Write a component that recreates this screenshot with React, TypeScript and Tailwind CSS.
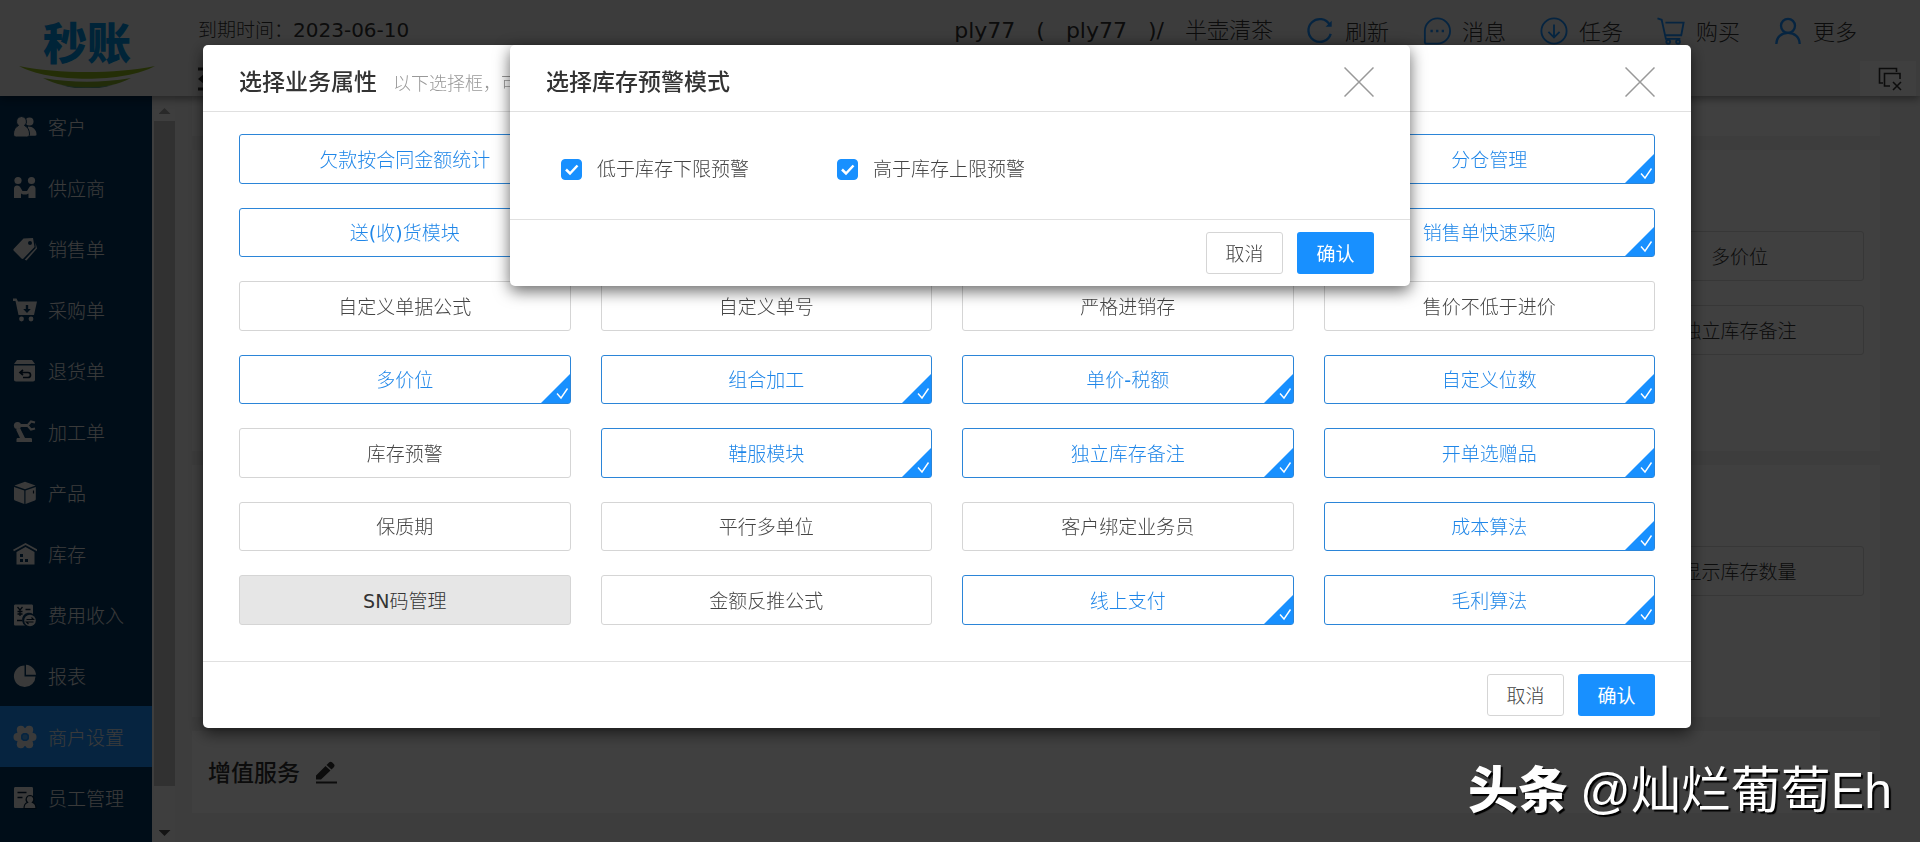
import React, { useState } from 'react';

type IconProps = { className?: string };

const UsersIcon: React.FC<IconProps> = ({ className }) => (
    <svg viewBox="0 0 24 24" fill="currentColor" className={className}>
        <circle cx="16.5" cy="6.5" r="4" />
        <path d="M15 11.500c5 0 8.500 3.500 8.500 8 0 .8-.5 1.200-1.300 1.200H15z" />
        <path d="M8.500 1.500a5 5 0 0 1 3 9c3 1.300 5 4.500 5 8.500 0 2-1 3-3 3h-10c-2 0-3-1-3-3 0-4 2-7.200 5-8.500a5 5 0 0 1 3-9z" stroke="#003560" strokeWidth="1" />
    </svg>
);

const HandshakeIcon: React.FC<IconProps> = ({ className }) => (
    <svg viewBox="0 0 24 24" fill="currentColor" className={className}>
        <circle cx="5" cy="4.500" r="3.600" />
        <circle cx="18.500" cy="4.500" r="3.600" />
        <path d="M1 22V12.500C1 10.500 2.500 9.500 4 9.500c2 0 3 1 4 3l1.500 2.500h4.500l1.500-2.500c1-2 2-3 4-3 1.500 0 3 1 3 3V22h-7v-4.500l-2 1h-3.500l-2-1V22z" />
    </svg>
);

const TagIcon: React.FC<IconProps> = ({ className }) => (
    <svg viewBox="0 0 24 24" fill="currentColor" className={className}>
        <path fillRule="evenodd" d="M10.500 1.500 20 1l1.500 9-11 11.500c-.6.600-1.300.600-2 0L.8 13.700c-.6-.6-.6-1.300 0-2zM17 4a2 2 0 1 0 0 4 2 2 0 0 0 0-4z" />
        <path d="M22.500 5.500 24 11.500 13.500 23.500l-1.800-.8L22.700 11z" />
    </svg>
);

const PurchaseIcon: React.FC<IconProps> = ({ className }) => (
    <svg viewBox="0 0 24 24" fill="currentColor" className={className}>
        <path fillRule="evenodd" d="M0 .500h3.500l1.500 3h19l-3 13.500H5.500L2.500 3H0zM12.800 7v4h-2.600l3.800 4 3.800-4h-2.600V7z" />
        <circle cx="8.500" cy="21" r="2.400" />
        <circle cx="18" cy="21" r="2.400" />
    </svg>
);

const ReturnIcon: React.FC<IconProps> = ({ className }) => (
    <svg viewBox="0 0 24 24" fill="currentColor" className={className}>
        <path d="M4 1h15l3 4H1z" />
        <path d="M1 6.500h21v14c0 1.200-.6 2-2 2H3c-1.400 0-2-.8-2-2z" />
        <path d="M10 11 7 13.500l3 2.500M7.500 13.500H15a2.500 2.500 0 0 1 0 5h-5" fill="none" stroke="#001f3a" strokeWidth="1.700" />
    </svg>
);

const RobotArmIcon: React.FC<IconProps> = ({ className }) => (
    <svg viewBox="0 0 24 24" fill="currentColor" className={className}>
        <circle cx="4.500" cy="5.500" r="3.600" />
        <path d="M8 4h6.500v3H8zM3 9.500l4-1.500 5 10h5.500c1 0 1.500.5 1.500 1.500V22H3.500v-2.500c0-1 .5-1.500 1.500-1.500h2z" />
        <path d="M22 2.500 18 1.500l-3.500 4 3.500 4 4-1" fill="none" stroke="currentColor" strokeWidth="2.200" />
    </svg>
);

const BoxIcon: React.FC<IconProps> = ({ className }) => (
    <svg viewBox="0 0 24 24" fill="currentColor" className={className}>
        <path d="M12 .800 22.500 4.500 12 8.200 1.500 4.500z" />
        <path d="M1 6l10.300 3.600V23L2 19.500c-.7-.3-1-.8-1-1.500zM22.800 6 12.500 9.600V23l9.300-3.500c.7-.3 1-.8 1-1.500z" />
        <path d="M20.500 9.500v3" stroke="#001f3a" strokeWidth="1.200" />
    </svg>
);

const WarehouseIcon: React.FC<IconProps> = ({ className }) => (
    <svg viewBox="0 0 24 24" fill="currentColor" className={className}>
        <path d="M.5 8.500 12.500 2l12 6.500" fill="none" stroke="currentColor" strokeWidth="1.800" />
        <path fillRule="evenodd" d="M3.500 10 12.500 5l9 5v12.500h-18zM7 12v3h3v-3zM7 17v3h3v-3zM12 17v3h3v-3z" />
    </svg>
);

const ExpenseIcon: React.FC<IconProps> = ({ className }) => (
    <svg viewBox="0 0 24 24" fill="currentColor" className={className}>
        <path d="M1 3c0-1 .6-1.500 1.500-1.500h16c1 0 1.500.5 1.500 1.500v8a7 7 0 0 0-8 11.500H2.500C1.600 22.500 1 22 1 21z" />
        <path d="m4.500 4 2.500 3 2.500-3M7 7v6M4.500 8.500h5M4.500 11h5M12.500 6.500h5M4 17.500h5" fill="none" stroke="#001f3a" strokeWidth="1.300" />
        <circle cx="17" cy="17.500" r="5.800" />
        <path d="M13.500 16.500h7l-2-2M20.500 19h-7l2 2" fill="none" stroke="#001f3a" strokeWidth="1.200" />
    </svg>
);

const PieIcon: React.FC<IconProps> = ({ className }) => (
    <svg viewBox="0 0 24 24" fill="currentColor" className={className}>
        <path d="M11.500 1.500v11h11A10.800 10.800 0 1 1 11.500 1.500z" />
        <path d="M13 .800c5.500.5 9.500 4.500 10 10H13z" />
    </svg>
);

const GearIcon: React.FC<IconProps> = ({ className }) => (
    <svg viewBox="0 0 24 24" fill="currentColor" className={className}>
        <circle cx="7.800" cy="4.800" r="4" />
        <circle cx="16.200" cy="4.800" r="4" />
        <circle cx="19.500" cy="12" r="4" />
        <circle cx="16.200" cy="19.200" r="4" />
        <circle cx="7.800" cy="19.200" r="4" />
        <circle cx="4.500" cy="12" r="4" />
        <circle cx="12" cy="12" r="6.500" fill="none" stroke="currentColor" strokeWidth="5" />
        <circle cx="12" cy="12" r="4" fill="#1890ff" />
        <circle cx="12" cy="12" r="2.500" opacity=".3" />
    </svg>
);

const StaffIcon: React.FC<IconProps> = ({ className }) => (
    <svg viewBox="0 0 24 24" fill="currentColor" className={className}>
        <path d="M1 2.500C1 1.500 1.500 1 2.500 1h16c1 0 1.500.5 1.500 1.500V22H2.500C1.500 22 1 21.500 1 20.500z" />
        <path d="M4.500 6.500h9M4.500 11.500h5" stroke="#001f3a" strokeWidth="1.600" />
        <path d="M17 9.500a4 4 0 0 1 2.500 7c2 .6 3.500 2.600 3.500 6H11c0-3.400 1.500-5.400 3.500-6a4 4 0 0 1 2.500-7z" stroke="#001f3a" strokeWidth="1.200" />
    </svg>
);

const lineIcon = { viewBox: '0 0 30 30', fill: 'none', stroke: 'currentColor', strokeWidth: 2 };

const RefreshIcon: React.FC<IconProps> = ({ className }) => (
    <svg {...lineIcon} strokeWidth={2.5} className={className}>
        <path d="M25.500 8.500A12.200 12.200 0 1 0 26.500 18" />
        <path d="M27.500 4v6.500h-6.500z" fill="currentColor" stroke="none" />
    </svg>
);

const MessageIcon: React.FC<IconProps> = ({ className }) => (
    <svg {...lineIcon} className={className}>
        <path d="M4 28.500h11.500A13.500 13.500 0 1 0 2 15v12c0 1 .8 1.500 2 1.500z" />
        <path d="M8 15h2.500M14 15h2.500M20 15h2.500" strokeWidth="2.500" />
    </svg>
);

const TaskIcon: React.FC<IconProps> = ({ className }) => (
    <svg {...lineIcon} className={className}>
        <circle cx="15" cy="15" r="13.500" />
        <path d="M15 8v14M9 16l6 6 6-6" />
    </svg>
);

const CartIcon: React.FC<IconProps> = ({ className }) => (
    <svg {...lineIcon} className={className}>
        <path d="M.5 1.500 5 3l4.500 20.500H25M9 6h19.500L26 19.500H9" />
        <circle cx="12" cy="26.500" r="2" />
        <circle cx="22.500" cy="26.500" r="2" />
    </svg>
);

const PersonIcon: React.FC<IconProps> = ({ className }) => (
    <svg {...lineIcon} strokeWidth={2.5} className={className}>
        <circle cx="15" cy="9.500" r="7.500" />
        <path d="M2.500 29C2.500 21.500 8 17 15 17s12.500 4.500 12.500 12" />
    </svg>
);

const MenuFoldIcon: React.FC<IconProps> = ({ className }) => (
    <svg viewBox="0 0 24 24" fill="none" stroke="currentColor" strokeWidth="3" className={className}>
        <path d="M0 2h24M10 9h14M10 15h14M0 22h24" />
        <path d="M6 7v10l-6-5z" fill="currentColor" stroke="none" />
    </svg>
);

const CloseTabsIcon: React.FC<IconProps> = ({ className }) => (
    <svg viewBox="0 0 24 24" fill="none" stroke="currentColor" strokeWidth="1.600" className={className}>
        <path d="M5 16H1.500V1.500h17V5" />
        <path d="M12 19H6.500V6.500h15.500V12M15 15l8 8M23 15l-8 8" />
    </svg>
);

const EditIcon: React.FC<IconProps> = ({ className }) => (
    <svg viewBox="0 0 24 24" fill="currentColor" className={className}>
        <path d="M2 18.500V14.500L11.500 5l5 4.500L7 18.500zM12.500 4l2.500-2.500c1-.9 2.300-.9 3.300 0l1.500 1.500c1 1 1 2.200 0 3.200L17.500 8.500zM2 20.500h21v2H2z" />
    </svg>
);

const CloseIcon: React.FC<IconProps> = ({ className }) => (
    <svg viewBox="0 0 30 30" stroke="currentColor" strokeWidth="1.500" className={className}>
        <path d="M.5.500l29 29M29.500.500l-29 29" />
    </svg>
);

const menu = [
    { label: '客户', icon: UsersIcon },
    { label: '供应商', icon: HandshakeIcon },
    { label: '销售单', icon: TagIcon },
    { label: '采购单', icon: PurchaseIcon },
    { label: '退货单', icon: ReturnIcon },
    { label: '加工单', icon: RobotArmIcon },
    { label: '产品', icon: BoxIcon },
    { label: '库存', icon: WarehouseIcon },
    { label: '费用收入', icon: ExpenseIcon },
    { label: '报表', icon: PieIcon },
    { label: '商户设置', icon: GearIcon },
    { label: '员工管理', icon: StaffIcon },
];

const actions = [
    { label: '刷新', icon: RefreshIcon },
    { label: '消息', icon: MessageIcon },
    { label: '任务', icon: TaskIcon },
    { label: '购买', icon: CartIcon },
    { label: '更多', icon: PersonIcon },
];

const options = [
    { label: '欠款按合同金额统计', on: true },
    { label: '', on: true },
    { label: '', on: true },
    { label: '分仓管理', on: true },
    { label: '送(收)货模块', on: true },
    { label: '', on: true },
    { label: '', on: true },
    { label: '销售单快速采购', on: true },
    { label: '自定义单据公式', on: false },
    { label: '自定义单号', on: false },
    { label: '严格进销存', on: false },
    { label: '售价不低于进价', on: false },
    { label: '多价位', on: true },
    { label: '组合加工', on: true },
    { label: '单价-税额', on: true },
    { label: '自定义位数', on: true },
    { label: '库存预警', on: false },
    { label: '鞋服模块', on: true },
    { label: '独立库存备注', on: true },
    { label: '开单选赠品', on: true },
    { label: '保质期', on: false },
    { label: '平行多单位', on: false },
    { label: '客户绑定业务员', on: false },
    { label: '成本算法', on: true },
    { label: 'SN码管理', on: false, disabled: true },
    { label: '金额反推公式', on: false },
    { label: '线上支付', on: true },
    { label: '毛利算法', on: true },
];

// latin runs keep the regular weight, chinese text is light
const MixedText: React.FC<{ text: string }> = ({ text }) => (
    <>
        {text.split(/([\x20-\x7e]+)/).filter(Boolean).map((part, i) => (
            <span key={i} className={/^[\x20-\x7e]/.test(part) ? 'font-normal' : ''}>{part}</span>
        ))}
    </>
);

const Header = () => (
    <header className="relative z-10 flex h-24 shrink-0 bg-[#efefef] text-[#333] shadow-[0_3px_8px_rgba(0,0,0,0.4)]">
        <div className="flex w-[174px] shrink-0 flex-col items-center pt-6">
            <span className="text-[44px] leading-[42px] font-black text-[#0090e0]">秒账</span>
            <svg viewBox="0 0 136 22" className="h-[22px] w-[136px]">
                <path d="M0 0c40 8 96 8 136 0-30 17-106 17-136 0z" fill="#8fb81f" />
                <path d="M24 12c30 5 58 5 88 0-24 13-64 13-88 0z" fill="#86b02a" />
                <path d="M42 19c18 3 34 3 52 0-16 5-36 5-52 0z" fill="#5f9a80" />
            </svg>
        </div>
        <div className="flex min-w-0 flex-1 flex-col pl-6">
            <div className="flex h-[61px] items-center">
                <p className="pb-0.5 text-[19px] whitespace-nowrap">
                    到期时间：<span className="text-[20px] font-normal">2023-06-10</span>
                </p>
                <p className="ml-auto flex gap-[21px] text-[22px] whitespace-nowrap">
                    <span className="font-normal">ply77</span>
                    <span className="font-normal">(</span>
                    <span className="font-normal">ply77</span>
                    <span className="font-normal">)/</span>
                    <span>半壶清茶</span>
                </p>
                <nav className="flex pr-[30px] pl-8">
                    {actions.map(({ label, icon: Icon }) => (
                        <button key={label} className="flex w-[117px] items-center gap-2.5">
                            <Icon className="h-7 w-[30px] text-[#1890ff]" />
                            <span className="pt-1 text-[22px] leading-7">{label}</span>
                        </button>
                    ))}
                </nav>
            </div>
            <div className="flex flex-1 items-center justify-between pr-1">
                <button aria-label="menu"><MenuFoldIcon className="h-6 w-6" /></button>
                <button aria-label="close tabs" className="flex h-full w-14 items-center justify-center bg-[#fbfbfb] pl-1">
                    <CloseTabsIcon className="h-6 w-6" />
                </button>
            </div>
        </div>
    </header>
);

const Sidebar = () => (
    <aside className="flex shrink-0">
        <nav className="w-[152px] bg-[#003560]">
            {menu.map(({ label, icon: Icon }) => (
                <a key={label} href="#" className={`flex h-[61px] items-center gap-[11px] pt-1 pl-[13px] text-[19px] text-[#e8e8e8] ${label === '商户设置' ? 'bg-[#1890ff]' : ''}`}>
                    <Icon className="mb-1 h-6 w-6 shrink-0" />
                    {label}
                </a>
            ))}
        </nav>
        <div className="flex w-[23px] flex-col items-center bg-[#f5f5f5] pt-3 pb-1.5 pl-0.5">
            <div className="h-1.5 w-3 bg-[#a3a3a3] [clip-path:polygon(50%_0,100%_100%,0_100%)]" />
            <div className="my-[7px] mb-11 w-full flex-1 bg-[#c1c1c1]" />
            <div className="h-1.5 w-3 bg-[#505050] [clip-path:polygon(0_0,100%_0,50%_100%)]" />
        </div>
    </aside>
);

const Tile: React.FC<{ children: React.ReactNode }> = ({ children }) => (
    <div className="flex h-[50px] w-[249px] items-center justify-center rounded-[3px] border border-[#d9d9d9] pt-0.5 text-[19px]">{children}</div>
);

const Content = () => (
    <main className="flex flex-1 flex-col gap-3.5 pr-10 pl-[17px] text-[#333]">
        <section className="h-10 bg-white" />
        <section className="flex h-[301px] flex-col items-end gap-6 bg-white pt-[81px] pr-4">
            <Tile>多价位</Tile>
            <Tile>独立库存备注</Tile>
        </section>
        <section className="flex h-[252px] flex-col items-end bg-white pt-[81px] pr-4">
            <Tile>显示库存数量</Tile>
        </section>
        <section className="flex h-[82px] items-center gap-3.5 bg-white pt-0.5 pl-4">
            <h3 className="text-[23px] font-medium">增值服务</h3>
            <button aria-label="edit"><EditIcon className="h-6 w-6" /></button>
        </section>
    </main>
);

const DialogHeader: React.FC<{ title: string, hint?: string }> = ({ title, hint }) => (
    <div className="flex h-[67px] items-center border-b border-[#e0e0e0] px-9 pt-2">
        <h2 className="text-[23px] leading-8 font-medium whitespace-nowrap text-[#333]">{title}</h2>
        {hint && <p className="ml-4 pt-0.5 text-[18px] whitespace-nowrap text-[#999]">{hint}</p>}
        <button aria-label="close" className="ml-auto text-[#999]"><CloseIcon className="h-[30px] w-[30px]" /></button>
    </div>
);

const DialogFooter = () => (
    <div className="flex h-[67px] items-center justify-end gap-3.5 border-t border-[#e0e0e0] px-9 text-[19px]">
        <button className="h-[42px] w-[77px] rounded-[3px] border border-[#d5d5d5] bg-white pt-0.5 text-[#444]">取消</button>
        <button className="h-[42px] w-[77px] rounded-[3px] bg-[#1890ff] pt-0.5 font-normal text-white">确认</button>
    </div>
);

const OptionButton: React.FC<{ label: string, on: boolean, disabled?: boolean, onClick: () => void }> = ({ label, on, disabled, onClick }) => {
    let tone = 'border-[#d5d5d5] text-[#444]';
    if (disabled) tone = 'border-[#d5d5d5] bg-[#e6e6e6] text-[#333]';
    if (on) tone = 'border-[#2b85d8] text-[#1f86e8]';
    return (
        <button onClick={onClick} disabled={disabled} aria-pressed={on} className={`relative rounded-[3px] border pt-0.5 text-[19px] ${tone}`}>
            <MixedText text={label} />
            {on && (
                <svg viewBox="0 0 29 29" className="absolute right-0 bottom-0 h-[29px] w-[29px]">
                    <path d="M29 0v29H0z" fill="#1890ff" />
                    <path d="m16 19.500 4 4.500 6.500-9.500" fill="none" stroke="#fff" strokeWidth="1.400" />
                </svg>
            )}
        </button>
    );
};

const WarningCheck: React.FC<{ label: string }> = ({ label }) => (
    <label className="flex w-[276px] items-center gap-[15px] text-[19px] whitespace-nowrap text-[#444]">
        <span className="relative h-[21px] w-[21px]">
            <input type="checkbox" defaultChecked className="peer block h-[21px] w-[21px] appearance-none rounded-[4px] border border-[#bbb] checked:border-[#1890ff] checked:bg-[#1890ff]" />
            <svg viewBox="0 0 21 21" className="pointer-events-none absolute inset-0 hidden h-[21px] w-[21px] peer-checked:block">
                <path d="m5 10.500 4 4 7.500-8" fill="none" stroke="#fff" strokeWidth="2.500" />
            </svg>
        </span>
        {label}
    </label>
);

const App: React.FC = () => {
    const [items, setItems] = useState(options);

    const toggle = (index: number) => setItems(items.map((item, i) => (i === index ? { ...item, on: !item.on } : item)));

    return (
        <div className="relative flex h-screen flex-col overflow-hidden bg-[#f3f3f3] font-['DejaVu_Sans','Noto_Sans_CJK_SC',sans-serif] font-light">
            <Header />
            <div className="flex min-h-0 flex-1">
                <Sidebar />
                <Content />
            </div>

            <div className="fixed inset-0 z-20 bg-black/75 pt-[45px] pr-[229px] pl-[203px]">
                <div role="dialog" className="rounded-[5px] bg-white shadow-[0_5px_16px_rgba(0,0,0,0.6)]">
                    <DialogHeader title="选择业务属性" hint="以下选择框，可" />
                    <div className="px-9 pt-[22px] pb-9">
                        <div className="grid h-[491px] auto-rows-fr grid-cols-4 gap-x-[30px] gap-y-6">
                            {items.map((item, i) => (
                                <OptionButton key={i} {...item} onClick={() => toggle(i)} />
                            ))}
                        </div>
                    </div>
                    <DialogFooter />
                </div>
            </div>

            <div className="pointer-events-none fixed inset-0 z-30 flex items-start justify-center pt-[45px]">
                <div role="dialog" className="pointer-events-auto w-[900px] rounded-[5px] bg-white shadow-[0_5px_16px_rgba(0,0,0,0.6)]">
                    <DialogHeader title="选择库存预警模式" />
                    <div className="flex h-[107px] items-center px-[51px] pt-2">
                        <WarningCheck label="低于库存下限预警" />
                        <WarningCheck label="高于库存上限预警" />
                    </div>
                    <DialogFooter />
                </div>
            </div>

            <p className="absolute right-7 bottom-4 z-40 flex gap-3 font-['Liberation_Sans','Noto_Sans_CJK_SC',sans-serif] text-[50px] leading-[70px] text-white [text-shadow:2px_2px_1px_#000]">
                <span className="font-black">头条</span>
                <span className="font-normal">@灿烂葡萄Eh</span>
            </p>
        </div>
    );
};

export default App;
